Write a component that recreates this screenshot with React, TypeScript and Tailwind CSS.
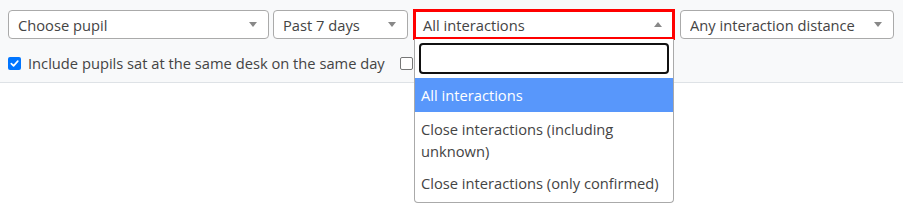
import React from "react";

const Arrow = ({ up = false }: { up?: boolean }) => (
  <span
    className={
      up
        ? "w-0 h-0 border-l-[4px] border-r-[4px] border-b-[5px] border-l-transparent border-r-transparent border-b-[#888]"
        : "w-0 h-0 border-l-[4px] border-r-[4px] border-t-[5px] border-l-transparent border-r-transparent border-t-[#888]"
    }
  />
);

const Select = ({ w, label }: { w: string; label: string }) => (
  <div className={`${w} h-[29px] bg-white border border-[#aaa] rounded-[4px] flex items-center justify-between pl-[9px] pr-[11px] text-[#444]`}>
    <span className="truncate">{label}</span>
    <Arrow />
  </div>
);

export default function App() {
  return (
    <div
      className="w-[903px] h-[211px] bg-white text-[14.7px] leading-[20px]"
      style={{ fontFamily: '"Open Sans", "Noto Sans", sans-serif' }}
    >
      <div className="bg-[#f8f9fa] border-b border-[#dee2e6] h-[83px] pt-[10px] pl-[8px]">
        <div className="flex items-start">
          <Select w="w-[261px]" label="Choose pupil" />
          <div className="w-[4px]" />
          <Select w="w-[135px]" label="Past 7 days" />
          <div className="w-[6px]" />
          <div className="relative w-[260px]">
            <div className="h-[29px] bg-white outline-[3px] outline-solid outline-[#ff0000] -outline-offset-2 border border-[#aaa] flex items-center justify-between pl-[8px] pr-[11px] text-[#444]">
              <span>All interactions</span>
              <Arrow up />
            </div>
            <div className="absolute left-0 top-[29px] w-[260px] bg-white border border-[#aaa] border-t-0 rounded-b-[4px] z-10 text-[#444]">
              <div className="p-[4px]">
                <div className="h-[31px] border-2 border-[#111] rounded-[4px] bg-white" />
              </div>
              <div className="bg-[#5897fb] text-white px-[6px] h-[34px] flex items-center">All interactions</div>
              <div className="px-[6px] pt-[6px] pb-[4px] leading-[22px]">Close interactions (including unknown)</div>
              <div className="px-[6px] pt-[6px] pb-[8px] leading-[22px]">Close interactions (only confirmed)</div>
            </div>
          </div>
          <div className="w-[6px]" />
          <Select w="w-[214px]" label="Any interaction distance" />
        </div>
        <div className="flex items-center mt-[14px] text-[#444]">
          <span className="w-[13px] h-[13px] rounded-[2px] bg-[#0075ff] flex items-center justify-center">
            <svg width="11" height="11" viewBox="0 0 12 12">
              <path d="M2.5 6.2 L5 8.6 L9.6 3.4" stroke="white" strokeWidth="1.8" fill="none" strokeLinecap="round" strokeLinejoin="round" />
            </svg>
          </span>
          <span className="ml-[7px]">Include pupils sat at the same desk on the same day</span>
          <span className="ml-[15px] w-[13px] h-[13px] rounded-[2px] border border-[#767676] bg-white" />
        </div>
      </div>
    </div>
  );
}
